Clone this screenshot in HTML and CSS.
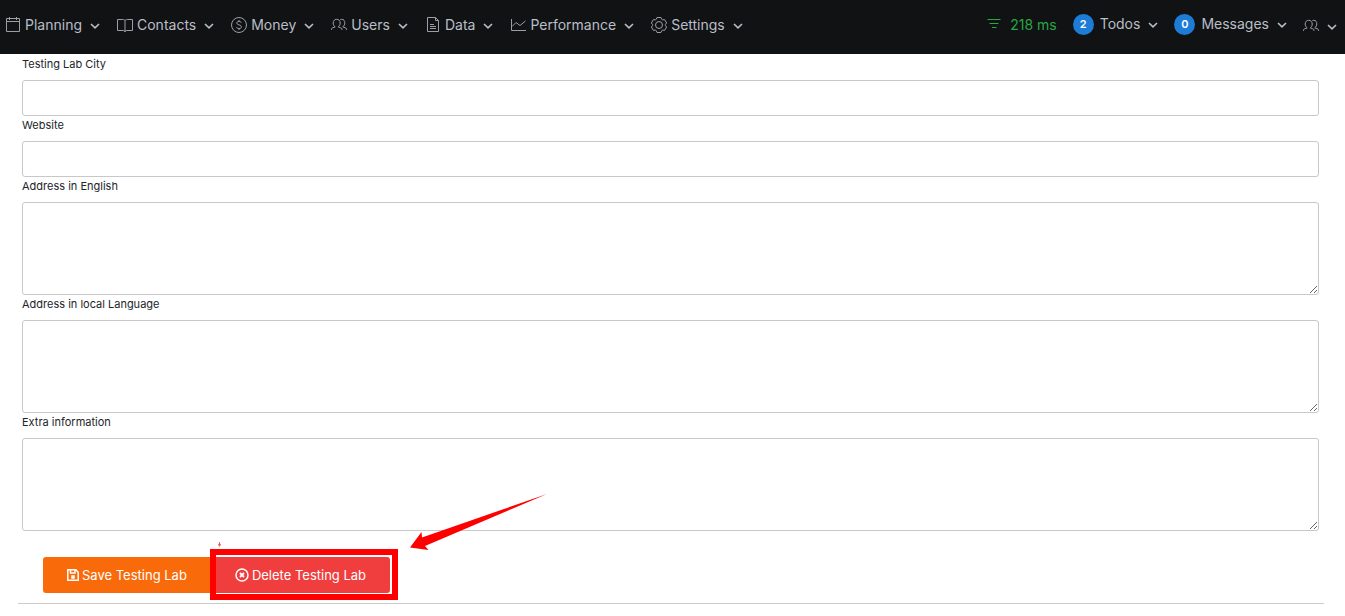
FILE: index.html
```html
<!DOCTYPE html>
<html lang="en">
<head>
    <meta charset="UTF-8">
    <meta name="viewport" content="width=device-width, initial-scale=1.0">
    <title>Testing Lab</title>
    <link rel="stylesheet" href="styles.css">
</head>
<body>
    <!-- Shared icons -->
    <svg class="sprite" aria-hidden="true">
        <symbol id="chevron" viewBox="0 0 10 16"><path d="M1 7l4 3.800L9 7" stroke-width="1.6"/></symbol>
        <symbol id="people" viewBox="0 0 16 16"><path d="M.5 13v-.8c0-.9.600-1.200 1.500-1.500l2.200-.8C2.800 9 2.200 7.800 2.200 6c0-2.200 1.400-3.700 3.500-3.700S9.200 3.800 9.200 6c0 1.800-.6 3-2 3.900l2.200.8c.9.300 1.500.6 1.500 1.500v.8M9.300 2.700c.4-.3.900-.4 1.400-.4 2 0 3.100 1.500 3.100 3.500 0 1.900-.7 3.100-2.100 4l2.400.9c.9.300 1.400.7 1.400 1.500v.8"/></symbol>
    </svg>

    <header class="topbar">
        <nav class="menu">
            <button class="menu-item" type="button">
                <svg class="icon" viewBox="0 0 16 16"><path d="M1.500 1.500h13v13h-13zM1.500 4.500h13M4.500 0v3M11.500 0v3"/></svg>
                <span>Planning</span>
                <svg class="chevron"><use href="#chevron"/></svg>
            </button>
            <button class="menu-item" type="button">
                <svg class="icon" viewBox="0 0 16 16"><path d="M8 3.500C7 2.500 6 2.500 5 2.500H.5v11H6c1 0 2 .3 2 1.500 0-1.200 1-1.500 2-1.500h5.500v-11H11c-1 0-2 0-3 1zM8 3.500V15"/></svg>
                <span>Contacts</span>
                <svg class="chevron"><use href="#chevron"/></svg>
            </button>
            <button class="menu-item" type="button">
                <svg class="icon" viewBox="0 0 16 16"><circle cx="8" cy="8" r="7.500"/><path d="M10.200 5.800C10 4.800 9.200 4.400 8 4.400c-1.300 0-2.200.6-2.200 1.700C5.800 8.500 10.400 7.300 10.400 9.800c0 1.200-1 1.800-2.400 1.800-1.300 0-2.200-.5-2.400-1.600M8 3v1.500M8 11.500V13"/></svg>
                <span>Money</span>
                <svg class="chevron"><use href="#chevron"/></svg>
            </button>
            <button class="menu-item" type="button">
                <svg class="icon"><use href="#people"/></svg>
                <span>Users</span>
                <svg class="chevron"><use href="#chevron"/></svg>
            </button>
            <button class="menu-item" type="button">
                <svg class="icon" viewBox="0 0 16 16"><path d="M2.500 .5h8l3 3v11h-11zM10.500 .5v3h3M5 7.500h4M5 9.500h6M5 11.500h6"/></svg>
                <span>Data</span>
                <svg class="chevron"><use href="#chevron"/></svg>
            </button>
            <button class="menu-item" type="button">
                <svg class="icon" viewBox="0 0 16 16"><path d="M1.500 2v11.500H16M2 9.500l4-4 4 3L15.500 4"/></svg>
                <span>Performance</span>
                <svg class="chevron"><use href="#chevron"/></svg>
            </button>
            <button class="menu-item" type="button">
                <svg class="icon" viewBox="0 0 16 16"><path d="M6 .5h4l.7 1.800 1 .6 1.900-.3 2 3.400-1.200 1.500v1l1.200 1.500-2 3.400-1.900-.3-1 .6L10 15.500H6l-.7-1.800-1-.6-1.900.3-2-3.400 1.200-1.500v-1L.4 6l2-3.400 1.900.3 1-.6z"/><circle cx="8" cy="8" r="3.500"/></svg>
                <span>Settings</span>
                <svg class="chevron"><use href="#chevron"/></svg>
            </button>
        </nav>
        <div class="status">
            <span class="timing">
                <svg class="timing-icon" viewBox="0 0 14 14"><path d="M.5 2.500h13M2.500 6.500h9M5 10.500h4.500"/></svg>
                218 ms
            </span>
            <button class="menu-item" type="button">
                <span class="count">2</span>
                <span>Todos</span>
                <svg class="chevron"><use href="#chevron"/></svg>
            </button>
            <button class="menu-item" type="button">
                <span class="count">0</span>
                <span>Messages</span>
                <svg class="chevron"><use href="#chevron"/></svg>
            </button>
            <button class="menu-item account" type="button" aria-label="Account">
                <svg class="icon"><use href="#people"/></svg>
                <svg class="chevron"><use href="#chevron"/></svg>
            </button>
        </div>
    </header>

    <main class="content">
        <form class="lab-form">
            <label for="city">Testing Lab City</label>
            <input type="text" id="city">
            <label for="website">Website</label>
            <input type="text" id="website">
            <label for="address_en">Address in English</label>
            <textarea id="address_en"></textarea>
            <label for="address_local">Address in local Language</label>
            <textarea id="address_local"></textarea>
            <label for="extra">Extra information</label>
            <textarea id="extra"></textarea>

            <div class="actions">
                <button class="btn btn-save" type="submit">
                    <svg class="btn-icon save-icon" viewBox="0 0 12 14"><path d="M.8 1.800h8l2.400 2.400v8H.8zM3.500 2v3h4.500V2M3 12"/><path d="M5 8h2v2H5z"/></svg>
                    Save Testing Lab
                </button>
                <div class="highlight">
                    <button class="btn btn-delete" type="button">
                        <svg class="btn-icon" viewBox="0 0 14 14"><circle cx="7" cy="7" r="6"/><path d="M5 5l4 4M9 5L5 9" stroke-width="1.800"/></svg>
                        Delete Testing Lab
                    </button>
                    <svg class="speck" viewBox="0 0 3 5"><path d="M1 0h1v1.500l1 1L1.500 5 0 2.500l1-1z"/></svg>
                    <svg class="arrow" viewBox="0 0 138 56"><path d="M137 0L12 43.500 11.500 38 0 53.500 18.500 56 15 52z"/></svg>
                </div>
            </div>
        </form>
    </main>
</body>
</html>
```

FILE: styles.css
```css
* {
    box-sizing: border-box;
}
body {
    margin: 0;
    font-family: Inter, "Liberation Sans", sans-serif;
    background-color: #fff;
    color: #212529;
}
svg {
    fill: none;
    stroke: currentColor;
    flex-shrink: 0;
}
.sprite {
    display: none;
}

/* Top bar */
.topbar {
    display: flex;
    justify-content: space-between;
    height: 54px;
    padding: 0 8px 4px 5px;
    background-color: #111214;
    color: #b9bec7;
    font-size: 14px;
}
.menu, .status {
    display: flex;
    align-items: center;
    gap: 17px;
}
.status {
    gap: 16px;
    padding-bottom: 2px;
}
.menu-item {
    display: flex;
    align-items: center;
    gap: 4px;
    padding: 0;
    border: none;
    background: none;
    color: inherit;
    font: inherit;
    line-height: 20px;
    white-space: nowrap;
    cursor: pointer;
}
.icon {
    width: 16px;
    height: 16px;
    color: #9a9fa6;
}
.chevron {
    width: 10px;
    height: 16px;
    margin-left: 4px;
}
.timing {
    display: flex;
    align-items: center;
    gap: 9px;
    color: #28a745;
}
.timing-icon {
    width: 14px;
    height: 14px;
}
.count {
    width: 21px;
    height: 21px;
    margin-right: 2px;
    border-radius: 50%;
    background-color: #1c7cd6;
    color: #fff;
    font-size: 11px;
    font-weight: 600;
    line-height: 21px;
    text-align: center;
}
.account {
    padding-top: 4px;
}

/* Form */
.content {
    margin: 0 21px 0 18px;
}
.lab-form {
    display: flex;
    flex-direction: column;
    padding: 1px 5px 10px 4px;
    border-bottom: 1px solid #ccc;
}
label {
    height: 25px;
    font-size: 11px;
    line-height: 18px;
}
input, textarea {
    width: 100%;
    border: 1px solid #c8c8c8;
    border-radius: 3px;
    background-color: #fff;
    font: inherit;
    font-size: 13px;
    padding: 8px;
}
input {
    height: 36px;
}
textarea {
    height: 93px;
    resize: vertical;
}

/* Buttons */
.actions {
    display: flex;
    margin: 26px 0 0 21px;
}
.btn {
    display: flex;
    align-items: center;
    gap: 3px;
    height: 36px;
    padding: 0 24px;
    border: none;
    color: #fff;
    font: inherit;
    font-size: 13px;
    white-space: nowrap;
    cursor: pointer;
}
.btn-save {
    border-radius: 3px 0 0 3px;
    background-color: #f96a0a;
}
.btn-delete {
    border-radius: 0 3px 3px 0;
    background-color: #f03e3e;
}
.btn-icon {
    width: 14px;
    height: 14px;
    stroke-width: 1.5;
}
.save-icon {
    width: 12px;
}

/* Red marker around the delete button */
.highlight {
    position: relative;
}
.highlight::after {
    content: "";
    position: absolute;
    inset: -8px -8px -7px -1px;
    border: 6px solid #f00;
    pointer-events: none;
}
.arrow {
    position: absolute;
    left: 199px;
    bottom: 43px;
    width: 138px;
    height: 56px;
    fill: #f00;
    stroke: none;
    pointer-events: none;
}
.speck {
    position: absolute;
    left: 7px;
    top: -15px;
    width: 3px;
    height: 5px;
    fill: #e06060;
    stroke: none;
}
```
